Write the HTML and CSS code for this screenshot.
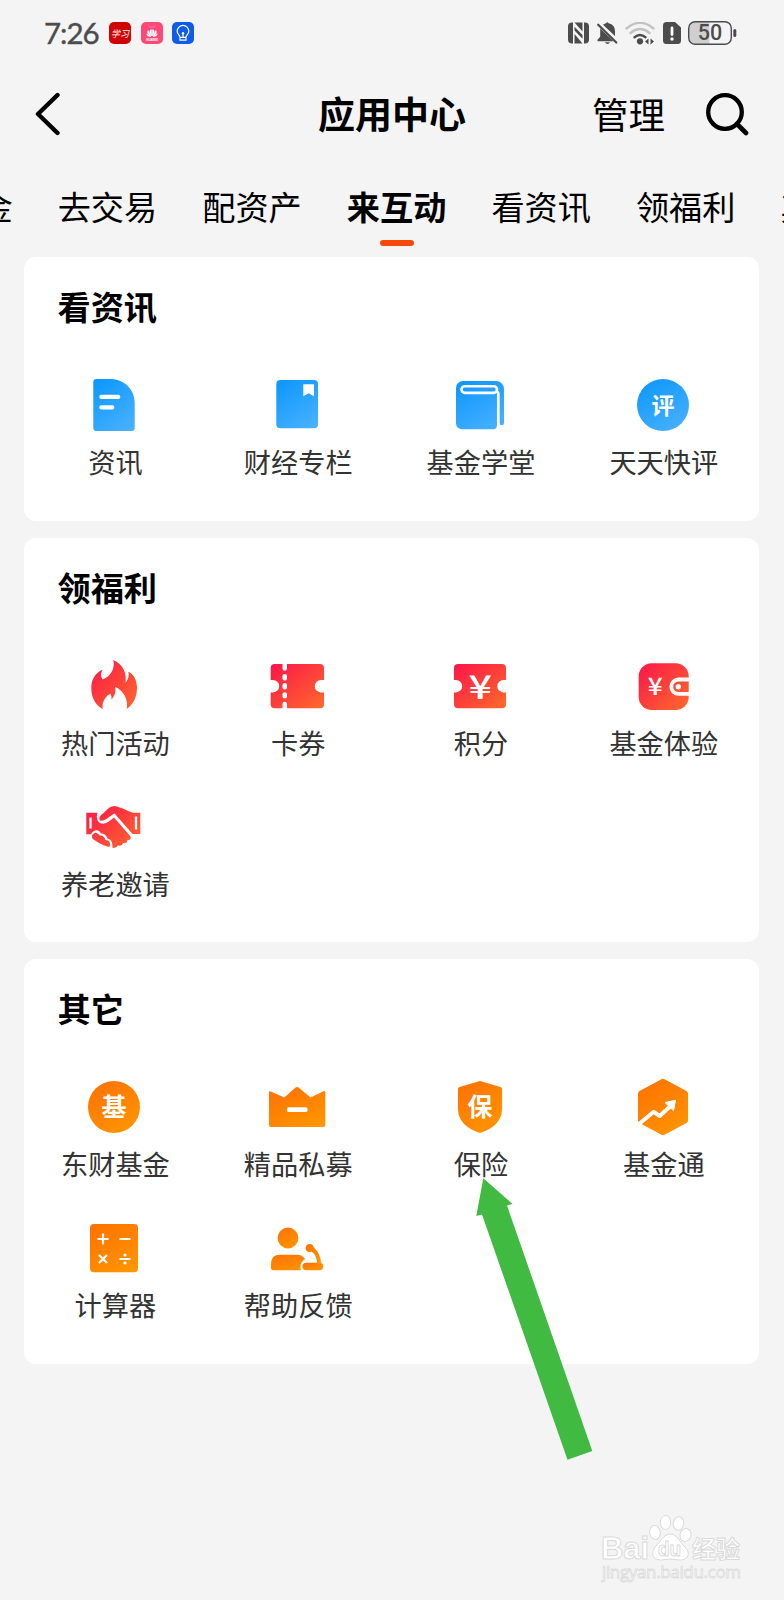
FILE: index.html
```html
<!DOCTYPE html>
<html lang="zh-CN">
<head>
    <meta charset="UTF-8">
    <meta name="viewport" content="width=device-width, initial-scale=1.0">
    <title>应用中心</title>
    <link rel="stylesheet" href="styles.css">
</head>
<body>
    <!-- shared gradients -->
    <svg class="defs" width="0" height="0">
        <defs>
            <linearGradient id="blue" x1="0.2" y1="0" x2="0.8" y2="1">
                <stop offset="0" stop-color="#0f98ff"/>
                <stop offset="1" stop-color="#47b0ff"/>
            </linearGradient>
            <linearGradient id="red" x1="0" y1="0" x2="1" y2="1">
                <stop offset="0" stop-color="#fb1549"/>
                <stop offset="1" stop-color="#ff6a2c"/>
            </linearGradient>
            <linearGradient id="orange" x1="0.2" y1="0" x2="0.8" y2="1">
                <stop offset="0" stop-color="#ff7300"/>
                <stop offset="1" stop-color="#ff9500"/>
            </linearGradient>
        </defs>
    </svg>

    <div class="page">
        <div class="status">
            <span class="time">7:26</span>
            <div class="status-apps">
                <svg width="22" height="22" viewBox="0 0 22 22">
                    <rect width="22" height="22" rx="5" fill="#cf0404"/>
                    <text class="app-text" x="11" y="15" text-anchor="middle">学习</text>
                </svg>
                <svg width="22" height="22" viewBox="0 0 22 22">
                    <rect width="22" height="22" rx="5" fill="#fb4a78"/>
                    <path d="M7.5 4q3.5 3 7 0" fill="none" stroke="#fda0b8" stroke-width=".6"/>
                    <g fill="#fff" stroke="#fff" stroke-width=".5">
                        <path d="M10.7 14C8 10.5 8.500 8 10.4 7.5zM11.300 14C14 10.5 13.5 8 11.600 7.500zM10.200 14C6.500 12.500 6 10 7.200 8.500zM11.800 14C15.500 12.500 16 10 14.800 8.500zM9.800 14.500C7 14.600 5.800 13.500 5.800 11.800zM12.200 14.500C15 14.600 16.200 13.500 16.200 11.800z"/>
                    </g>
                    <text class="brand-text" x="11" y="18.700" text-anchor="middle">HUAWEI</text>
                </svg>
                <svg width="22" height="22" viewBox="0 0 22 22">
                    <rect width="22" height="22" rx="5" fill="#0f5bea"/>
                    <path d="M8 15.300C8 13 5.200 12.500 5.200 9.200a5.800 5.800 0 0 1 11.600 0C16.800 12.500 14 13 14 15.300zM8 15.300v2.900h6v-2.900M11 12v3" fill="none" stroke="#fff" stroke-width="1.200"/>
                    <circle cx="11" cy="11.300" r="1.200" fill="#fff"/>
                </svg>
            </div>
            <div class="status-icons">
                <svg width="21" height="22" viewBox="0 0 21 22">
                    <path d="M4 .5H5v21H4a4 4 0 0 1-4-4v-13a4 4 0 0 1 4-4zM16 .5h1a4 4 0 0 1 4 4v13a4 4 0 0 1-4 4h-1zM6.500 .5L14.500 9.500V.5zM6.500 4.800L14.500 13v3.800L6.500 8.500zM6.500 12l8 9.500h-8z" fill="#4c4c4c"/>
                </svg>
                <svg width="21" height="22" viewBox="0 0 21 22">
                    <path d="M6 2.800Q8 1.500 9 1.300q1.200-2.200 2.600 0Q18 3 18 9v5zM3.200 6.500L16.500 19.200H.5v-1.500l2.700-3zM8 20.200h5q-.8 1.800-2.500 1.800T8 20.200z" fill="#4c4c4c"/>
                    <path d="M1.200 2.700L19.300 20.500" stroke="#4c4c4c" stroke-width="2.200" stroke-linecap="round"/>
                </svg>
                <svg width="30" height="23" viewBox="0 0 30 23">
                    <g fill="none" stroke-linecap="round" stroke-width="2.400">
                        <path d="M1.500 6.500Q15-5 28.500 6.500M5.500 11q9.500-7.800 19 0" stroke="#c2c2c2"/>
                        <path d="M9.500 15.200q5.500-4.500 11 0" stroke="#4c4c4c"/>
                    </g>
                    <path d="M23.500 16.500v6l-3.500-3zM25.500 16.500v6l3.500-3z" fill="#4c4c4c"/>
                    <circle cx="15" cy="19.300" r="3.100" fill="#4c4c4c"/>
                </svg>
                <svg width="18" height="22" viewBox="0 0 18 22">
                    <path d="M3.500 0H12l6 5.500v13a3.500 3.500 0 0 1-3.500 3.500h-11A3.500 3.500 0 0 1 0 18.500v-15A3.500 3.500 0 0 1 3.500 0z" fill="#4c4c4c"/>
                    <path d="M9 6v6.500" stroke="#fff" stroke-width="2.800" stroke-linecap="round"/>
                    <circle cx="9" cy="17" r="1.700" fill="#fff"/>
                </svg>
                <svg width="49" height="24" viewBox="0 0 49 24">
                    <path d="M7 1h14.500v22H7a6 6 0 0 1-6-6V7a6 6 0 0 1 6-6z" fill="#cfcfcf"/>
                    <rect x=".7" y=".7" width="42.600" height="22.600" rx="6.500" fill="none" stroke="#4c4c4c" stroke-width="1.400"/>
                    <path d="M46.800 9.500v5" stroke="#4c4c4c" stroke-width="3" stroke-linecap="round"/>
                    <text class="battery-text" x="22" y="19.200" text-anchor="middle">50</text>
                </svg>
            </div>
        </div>

        <div class="header">
            <svg width="26" height="44" viewBox="0 0 26 44">
                <path d="M22.500 3L3 22L22.500 41" fill="none" stroke="#000" stroke-width="4.400" stroke-linecap="round" stroke-linejoin="round"/>
            </svg>
            <h1>应用中心</h1>
            <div class="actions">
                <span>管理</span>
                <svg width="44" height="44" viewBox="0 0 44 44">
                    <circle cx="20" cy="20" r="16.800" fill="none" stroke="#000" stroke-width="4.300"/>
                    <path d="M32 32l9 9" stroke="#000" stroke-width="4.600" stroke-linecap="round"/>
                </svg>
            </div>
        </div>

        <div class="tabs">
            <span>金</span>
            <span>去交易</span>
            <span>配资产</span>
            <span class="active">来互动</span>
            <span>看资讯</span>
            <span>领福利</span>
            <span>其它</span>
        </div>

        <div class="card">
            <h2>看资讯</h2>
            <div class="grid">
                <div class="item">
                    <svg viewBox="0 0 60 60">
                        <path d="M12.500 4H26C40 4 50.700 14 50.700 28V53a3 3 0 0 1-3 3H12.500a3.200 3.200 0 0 1-3.200-3.200V7.200A3.200 3.200 0 0 1 12.500 4z" fill="url(#blue)"/>
                        <rect x="15.300" y="19.700" width="21" height="4.400" rx="2" fill="#fff"/>
                        <rect x="15.300" y="30.200" width="15" height="4.400" rx="2" fill="#fff"/>
                    </svg>
                    <span>资讯</span>
                </div>
                <div class="item">
                    <svg viewBox="0 0 60 60">
                        <rect x="9.300" y="5" width="41.700" height="48.300" rx="4" fill="url(#blue)"/>
                        <path d="M36.300 9.300H47v12l-5.300-3-5.400 3z" fill="#fff"/>
                    </svg>
                    <span>财经专栏</span>
                </div>
                <div class="item">
                    <svg viewBox="0 0 60 60">
                        <path d="M13 6h33a8 8 0 0 1 8 8v34a2.200 2.200 0 0 1-4.400 0H47v2.300a4 4 0 0 1-4 4H12a6 6 0 0 1-6-6V13a7 7 0 0 1 7-7z" fill="url(#blue)"/>
                        <path d="M48.300 55V19q0-2.500-2.500-2.500" fill="none" stroke="#fff" stroke-width="2.700"/>
                        <rect x="11.500" y="11.300" width="35.500" height="6.600" rx="3.300" fill="none" stroke="#fff" stroke-width="2.600"/>
                    </svg>
                    <span>基金学堂</span>
                </div>
                <div class="item">
                    <svg viewBox="0 0 60 60">
                        <circle cx="30" cy="30" r="26" fill="url(#blue)"/>
                        <text class="badge-text" x="30" y="38.500" font-size="23">评</text>
                    </svg>
                    <span>天天快评</span>
                </div>
            </div>
        </div>

        <div class="card">
            <h2>领福利</h2>
            <div class="grid">
                <div class="item">
                    <svg viewBox="0 0 60 60">
                        <path d="M29.300 4C39 8 43 17 41.500 27C44.500 23 45.500 19 44.300 15.700C50 18 53 25 53 31.700C53 41 49 49 42.700 53C45 43 38 33 31 31C32.500 36 30 41 27.300 43.500C27.800 41.500 27.500 39.500 26.300 37.700C20 41 18 47 18.700 53C11 49 7.300 41 7.300 31.700C7.300 24 11 17 18.700 13.500C16.500 17 16.500 20 18.500 23.500C26 21 31.500 13 29.300 4z" fill="url(#red)"/>
                    </svg>
                    <span>热门活动</span>
                </div>
                <div class="item">
                    <svg viewBox="0 0 60 60">
                        <rect x="3.700" y="8" width="53.300" height="44.300" rx="4" fill="url(#red)"/>
                        <g fill="#fff">
                            <path d="M3 24h3a6.200 6.200 0 0 1 0 12.400H3zM58 24h-4a6.200 6.200 0 0 0 0 12.400h4z"/>
                            <path d="M15.500 7.500H20v5a2.250 2.250 0 0 1-4.500 0zM15.500 53H20v-5a2.250 2.250 0 0 0-4.500 0z"/>
                            <rect x="15.500" y="18" width="4.500" height="6.400" rx="2"/>
                            <rect x="15.500" y="27" width="4.500" height="6.400" rx="2"/>
                            <rect x="15.500" y="36.200" width="4.500" height="6.400" rx="2"/>
                        </g>
                    </svg>
                    <span>卡券</span>
                </div>
                <div class="item">
                    <svg viewBox="0 0 60 60">
                        <rect x="4" y="8" width="52" height="44.300" rx="4" fill="url(#red)"/>
                        <path d="M3 24h3a6.200 6.200 0 0 1 0 12.400H3zM57 24h-3.500a6.200 6.200 0 0 0 0 12.400H57z" fill="#fff"/>
                        <text class="yen" x="18.500" y="42.500" font-size="33" textLength="23.500" lengthAdjust="spacingAndGlyphs">¥</text>
                    </svg>
                    <span>积分</span>
                </div>
                <div class="item">
                    <svg viewBox="0 0 60 60">
                        <rect x="5.700" y="7.300" width="50" height="46.700" rx="13" fill="url(#red)"/>
                        <path d="M56 23.500H45.500a7.200 7.200 0 0 0 0 14.400H56" fill="none" stroke="#fff" stroke-width="3.800"/>
                        <circle cx="45.300" cy="30.700" r="2.700" fill="#fff"/>
                        <text class="yen" x="14.700" y="39" font-size="24" textLength="15" lengthAdjust="spacingAndGlyphs">¥</text>
                    </svg>
                    <span>基金体验</span>
                </div>
                <div class="item">
                    <svg viewBox="0 0 60 60">
                        <path d="M2.300 15.700H13.500C12 20 13 25.500 17.500 26.500C22.500 27.500 26.500 23 30 20.500L46.500 39.500C47.500 42 45.500 43.500 43.500 43C43.500 45.500 41 47 39 46C38.500 48.500 36 49.500 34 48.300C33 50.500 31 51 28.500 51C28.500 44 27 42.500 23.500 41.500C22 37.500 19.500 36.500 17 36.500C14.500 31.500 9.500 33 7 37.300H2.300z
                                 M16 23.500C14.500 21.500 15.500 19 18.500 17C22 14 25 9 31 9Q33 9 48.500 15.700H56.300V37H48.500L30.500 16.500C26 18.500 21 25 16 23.500z
                                 M8 38.500C10.500 34.500 13 35 15.500 38.500C18.500 38 20.500 39.500 21.500 43C25.500 43 27 46.500 25.500 50Q20 49.500 9.500 42.500Q7.500 41 8 38.500z" fill="url(#red)"/>
                        <path d="M6.500 20.500v11M52 19.500v13" stroke="#fff" stroke-width="2.300"/>
                    </svg>
                    <span>养老邀请</span>
                </div>
            </div>
        </div>

        <div class="card">
            <h2>其它</h2>
            <div class="grid">
                <div class="item">
                    <svg viewBox="0 0 60 60">
                        <circle cx="30" cy="30" r="26" fill="url(#orange)"/>
                        <text class="badge-text" x="30" y="38.500" font-size="25">基</text>
                    </svg>
                    <span>东财基金</span>
                </div>
                <div class="item">
                    <svg viewBox="0 0 60 60">
                        <path d="M3.800 14.500L17.300 20.500L28 11Q30 9 32.200 11L43.500 20.500L56.500 14.300Q58.300 13.600 58.300 15.300V48a2 2 0 0 1-2 2H4a2 2 0 0 1-2-2V15.300Q2 13.700 3.800 14.500z" fill="url(#orange)"/>
                        <rect x="20" y="30.300" width="20.500" height="4.700" rx="1.500" fill="#fff"/>
                    </svg>
                    <span>精品私募</span>
                </div>
                <div class="item">
                    <svg viewBox="0 0 60 60">
                        <path d="M30 4L50.500 10Q52 10.500 52 12V32C52 44 43 52 30 56C17 52 8 44 8 32V12Q8 10.500 9.500 10z" fill="url(#orange)"/>
                        <text class="badge-text" x="30" y="38.500" font-size="25">保</text>
                    </svg>
                    <span>保险</span>
                </div>
                <div class="item">
                    <svg viewBox="0 0 60 60">
                        <path d="M28 2.500Q30 1.200 32 2.500L53.500 14Q55 15 55 16.500V43.500Q55 45 53.500 46L32 57.500Q30 58.800 28 57.500L6.500 46Q5 45 5 43.500V16.500Q5 15 6.500 14z" fill="url(#orange)"/>
                        <path d="M5.500 47.500L20.700 34.800L26.700 39L37 29.500" fill="none" stroke="#fff" stroke-width="4" stroke-linejoin="round"/>
                        <path d="M42.500 23.300L32 25.500L40.500 33.700z" fill="#fff" stroke="#fff" stroke-linejoin="round"/>
                    </svg>
                    <span>基金通</span>
                </div>
                <div class="item">
                    <svg viewBox="0 0 60 60">
                        <rect x="6" y="6" width="48" height="48.300" rx="4" fill="url(#orange)"/>
                        <path d="M19 15.500v11M13.500 21h11M35.500 21h11M15 37l8 8M23 37l-8 8M35.500 41h11" stroke="#fff" stroke-width="2.200"/>
                        <circle cx="41" cy="37" r="1.600" fill="#fff"/>
                        <circle cx="41" cy="45" r="1.600" fill="#fff"/>
                    </svg>
                    <span>计算器</span>
                </div>
                <div class="item">
                    <svg viewBox="0 0 60 60">
                        <g fill="url(#orange)">
                            <circle cx="21" cy="20" r="10.400"/>
                            <path d="M13 36.700H30Q35.500 36.700 38 41Q32 45 33.800 52.300H6a2 2 0 0 1-2-2V46Q4 36.700 13 36.700z"/>
                            <rect x="35.500" y="44.800" width="20.700" height="7.500" rx="3.700"/>
                            <path d="M42.700 26a4 4 0 0 1 4 3.500Q53.500 35 54.200 46H50Q50 37 44.500 33.500A4 4 0 1 1 42.700 26z"/>
                        </g>
                    </svg>
                    <span>帮助反馈</span>
                </div>
            </div>
        </div>

        <!-- pointer to 保险 -->
        <svg class="pointer" width="117" height="282" viewBox="0 0 117 282">
            <path d="M7.300 .3L36.500 26L31 27.500L116.300 273L91.500 281.700L6 36.500L.3 38z" fill="#40ba41"/>
        </svg>

        <svg class="watermark" width="150" height="76" viewBox="0 0 150 76">
            <g class="mark">
                <ellipse cx="54" cy="24.500" rx="5.200" ry="7" transform="rotate(-8 54 24.500)"/>
                <ellipse cx="64.500" cy="14.500" rx="5.200" ry="7"/>
                <ellipse cx="77.500" cy="15.500" rx="5.200" ry="6.800" transform="rotate(10 77.500 15.500)"/>
                <ellipse cx="84.500" cy="27" rx="5.500" ry="6.500" transform="rotate(15 84.500 27)"/>
                <path d="M69 26C76 26 78 33 83 38C90 44 88 52 79 52Q69 50 60 52C50 52 50 43 55 38C60 33 63 26 69 26z"/>
                <text x="0" y="51" font-size="31" textLength="48" lengthAdjust="spacingAndGlyphs">Bai</text>
                <text class="du" x="57" y="48" font-size="21" textLength="23" lengthAdjust="spacingAndGlyphs">du</text>
                <text class="cn" x="91" y="50" font-size="24">经验</text>
            </g>
            <text class="url" x="1" y="70" font-size="17" textLength="139">jingyan.baidu.com</text>
        </svg>
    </div>
</body>
</html>
```
FILE: styles.css
```css
* {
    box-sizing: border-box;
}

body {
    margin: 0;
    background-color: #f4f4f4;
    font-family: "Noto Sans CJK SC", sans-serif;
    color: #000;
}

.defs {
    position: absolute;
}

.page {
    position: relative;
    width: 784px;
    height: 1600px;
    overflow: hidden;
}

svg {
    display: block;
    flex: none;
}

/* status bar */
.status {
    display: flex;
    align-items: center;
    height: 66px;
    padding: 0 47px 0 44px;
}

.time {
    width: 65px;
    font-family: Lato, sans-serif;
    font-size: 29.5px;
    line-height: 40px;
    letter-spacing: -1px;
    color: #4c4c4c;
    -webkit-text-stroke: 0.4px #4c4c4c;
}

.status-apps {
    display: flex;
    gap: 9.5px;
}

.status-icons {
    display: flex;
    align-items: center;
    gap: 7.4px;
    margin-left: auto;
}

.app-text {
    font-size: 9px;
    font-style: italic;
    fill: #fff;
}

.brand-text {
    font-family: "Liberation Sans", sans-serif;
    font-size: 3px;
    font-weight: bold;
    fill: #fff;
}

.battery-text {
    font-family: Roboto, sans-serif;
    font-size: 21.5px;
    font-weight: 500;
    fill: #4c4c4c;
}

/* title bar */
.header {
    display: grid;
    grid-template-columns: 1fr auto 1fr;
    align-items: center;
    height: 96px;
    padding: 0 35px;
}

.header h1 {
    margin: -3px 0 0;
    font-size: 37px;
    font-weight: bold;
    line-height: 50px;
}

.actions {
    display: flex;
    align-items: center;
    justify-content: flex-end;
    gap: 40px;
    font-size: 36.5px;
    line-height: 50px;
}

/* tabs */
.tabs {
    display: flex;
    gap: 45px;
    height: 95px;
    margin-left: -20.5px;
    padding-top: 19px;
    font-size: 33.2px;
    line-height: 50px;
    white-space: nowrap;
}

.tabs span {
    flex: none;
}

.tabs .active {
    font-weight: bold;
}

.tabs .active::after {
    content: "";
    display: block;
    width: 34px;
    height: 6px;
    margin: 9px auto 0;
    border-radius: 3px;
    background-color: #f9470b;
}

/* cards */
.card {
    width: 734.5px;
    margin: 0 0 17px 24px;
    padding: 24px 0 4.5px;
    border-radius: 12px;
    background-color: #fff;
}

.card h2 {
    margin: 0 0 44px;
    padding-left: 33.5px;
    font-size: 33.2px;
    font-weight: bold;
    line-height: 50px;
}

.grid {
    display: grid;
    grid-template-columns: repeat(4, 182.8px);
}

.item {
    display: flex;
    flex-direction: column;
    align-items: center;
    height: 141px;
}

.item svg {
    width: 60px;
    height: 60px;
    margin-right: 2px;
}

.item span {
    margin-top: 8px;
    font-size: 27.2px;
    line-height: 36px;
    color: #333;
}

.badge-text {
    font-weight: bold;
    text-anchor: middle;
    fill: #fff;
}

.yen {
    font-weight: 500;
    fill: #fff;
}

.pointer {
    position: absolute;
    left: 476px;
    top: 1178px;
}

.watermark {
    position: absolute;
    left: 601px;
    top: 1508px;
}

.mark {
    fill: #fff;
    stroke: #dadada;
    stroke-width: 1;
    font-family: "Liberation Sans", sans-serif;
    font-weight: bold;
}

.mark .cn {
    font-family: "Noto Sans CJK SC", sans-serif;
}

.url {
    font-family: "Open Sans", sans-serif;
    fill: #fff;
    stroke: #dadada;
    stroke-width: 0.8;
}
```
